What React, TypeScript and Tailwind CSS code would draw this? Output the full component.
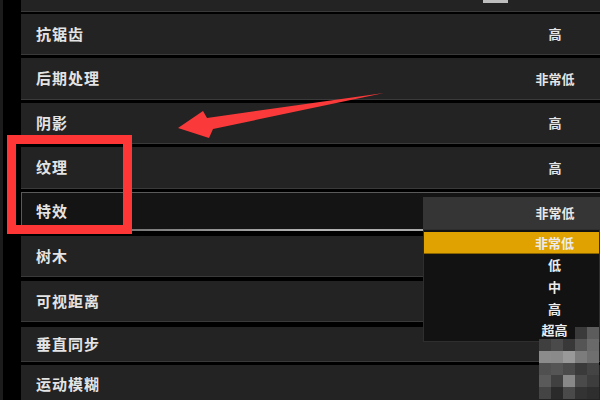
import React from 'react'

const font = { fontFamily: '"Noto Sans CJK SC", "Noto Sans", sans-serif' }

interface RowProps {
  label: string
  value?: string
  className: string
}

const Row: React.FC<RowProps> = ({ label, value, className }) => (
  <div className={`shrink-0 flex items-center justify-between bg-[#232323] border-b border-[#3a3a3a] ${className}`}>
    <span className='pl-[15px] text-[15px] font-bold tracking-[1px] text-[#e4e4e4]'>{label}</span>
    {value && <span className='w-[90px] text-center text-[13px] font-bold text-[#e4e4e4]'>{value}</span>}
  </div>
)

const mosaic = [
  ['transparent', 'transparent', 'transparent', '#3a3a3a', '#5c5c5c'],
  ['#3f3f3f', '#4a4a4a', '#383838', '#555555', '#6a6a6a'],
  ['#8c8c8c', '#8a8a8a', '#999999', '#7c7c7c', '#6f6f6f'],
  ['#505050', '#555555', '#4b4b4b', '#3a3a3a', '#444444'],
  ['#5a5a5a', '#404040', '#888888', '#4a4a4a', '#3d3d3d'],
  ['#444444', '#2a2a2a', '#4a4a4a', '#333333', '#2e2e2e'],
]

export default function App() {
  return (
    <div className='relative w-[600px] h-[400px] overflow-hidden bg-black flex' style={font}>
      {/* left strip */}
      <div className='w-[21px] h-full flex shrink-0'>
        <div className='w-[3px] h-full bg-[#1c1c1c]' />
      </div>

      <div className='flex-1 flex flex-col'>
        <div className='shrink-0 relative h-[12px] bg-[#232323] border-b border-[#3a3a3a]'>
          <div className='absolute left-[462px] top-0 w-[25px] h-[3px] bg-[#bdbdbd]' />
        </div>
        <Row label='抗锯齿' value='高' className='mt-[2px] h-[41px]' />
        <Row label='后期处理' value='非常低' className='mt-[3px] h-[42px]' />
        <Row label='阴影' value='高' className='mt-[3px] h-[41px]' />
        <Row label='纹理' value='高' className='mt-[3px] h-[42px]' />

        {/* selected row */}
        <div className='shrink-0 mt-[3px] h-[39px] flex flex-col bg-[#141414] border-t border-l border-[#5a5a5a]'>
          <div className='flex-1 flex items-center'>
            <span className='pl-[14px] text-[15px] font-bold tracking-[1px] text-[#e4e4e4]'>特效</span>
          </div>
          <div className='h-[2px] bg-gradient-to-r from-[#555] via-[#b5b5b5] to-[#9a9a9a]' />
        </div>

        <Row label='树木' className='mt-[5px] h-[41px]' />
        <Row label='可视距离' className='mt-[4px] h-[41px]' />
        <Row label='垂直同步' className='mt-[5px] h-[35px]' />
        <Row label='运动模糊' className='mt-[3px] h-[40px]' />
      </div>

      {/* dropdown */}
      <div className='absolute left-[423px] top-[197px] w-[177px] flex flex-col'>
        <div className='h-[32px] bg-[#353535] flex items-center justify-end'>
          <span className='w-[90px] text-center text-[13px] font-bold text-[#e8e8e8]'>非常低</span>
        </div>
        <div className='h-[113px] bg-[#121212] border border-[#2e2e2e] pt-[2px] flex flex-col'>
          {['非常低', '低', '中', '高', '超高'].map((v, i) => (
            <div key={v}
                 className={`h-[22px] flex items-center justify-end ${i === 0 ? 'bg-[#dfa200] border-b border-[#8a6400]' : ''}`}>
              <span className='w-[89px] text-center text-[13px] font-bold text-[#ececec]'>{v}</span>
            </div>
          ))}
        </div>
      </div>

      {/* mosaic */}
      <div className='absolute left-[539px] top-[327px] grid grid-cols-5 rounded-tl-[14px] overflow-hidden'>
        {mosaic.flatMap((r, ri) => r.map((c, ci) => (
          <div key={`${ri}-${ci}`} className='w-[12px] h-[12px]' style={{ backgroundColor: c }} />
        )))}
      </div>

      {/* red box */}
      <div className='absolute left-[7px] top-[135px] w-[125px] h-[99px] border-[9px] border-[#ff3636]' />

      {/* arrow */}
      <svg className='absolute left-0 top-0' width='600' height='400'>
        <polygon points='178,128 203,111 207,118 384,93 213,129 209,138' fill='#fa3a3a' />
      </svg>
    </div>
  )
}
